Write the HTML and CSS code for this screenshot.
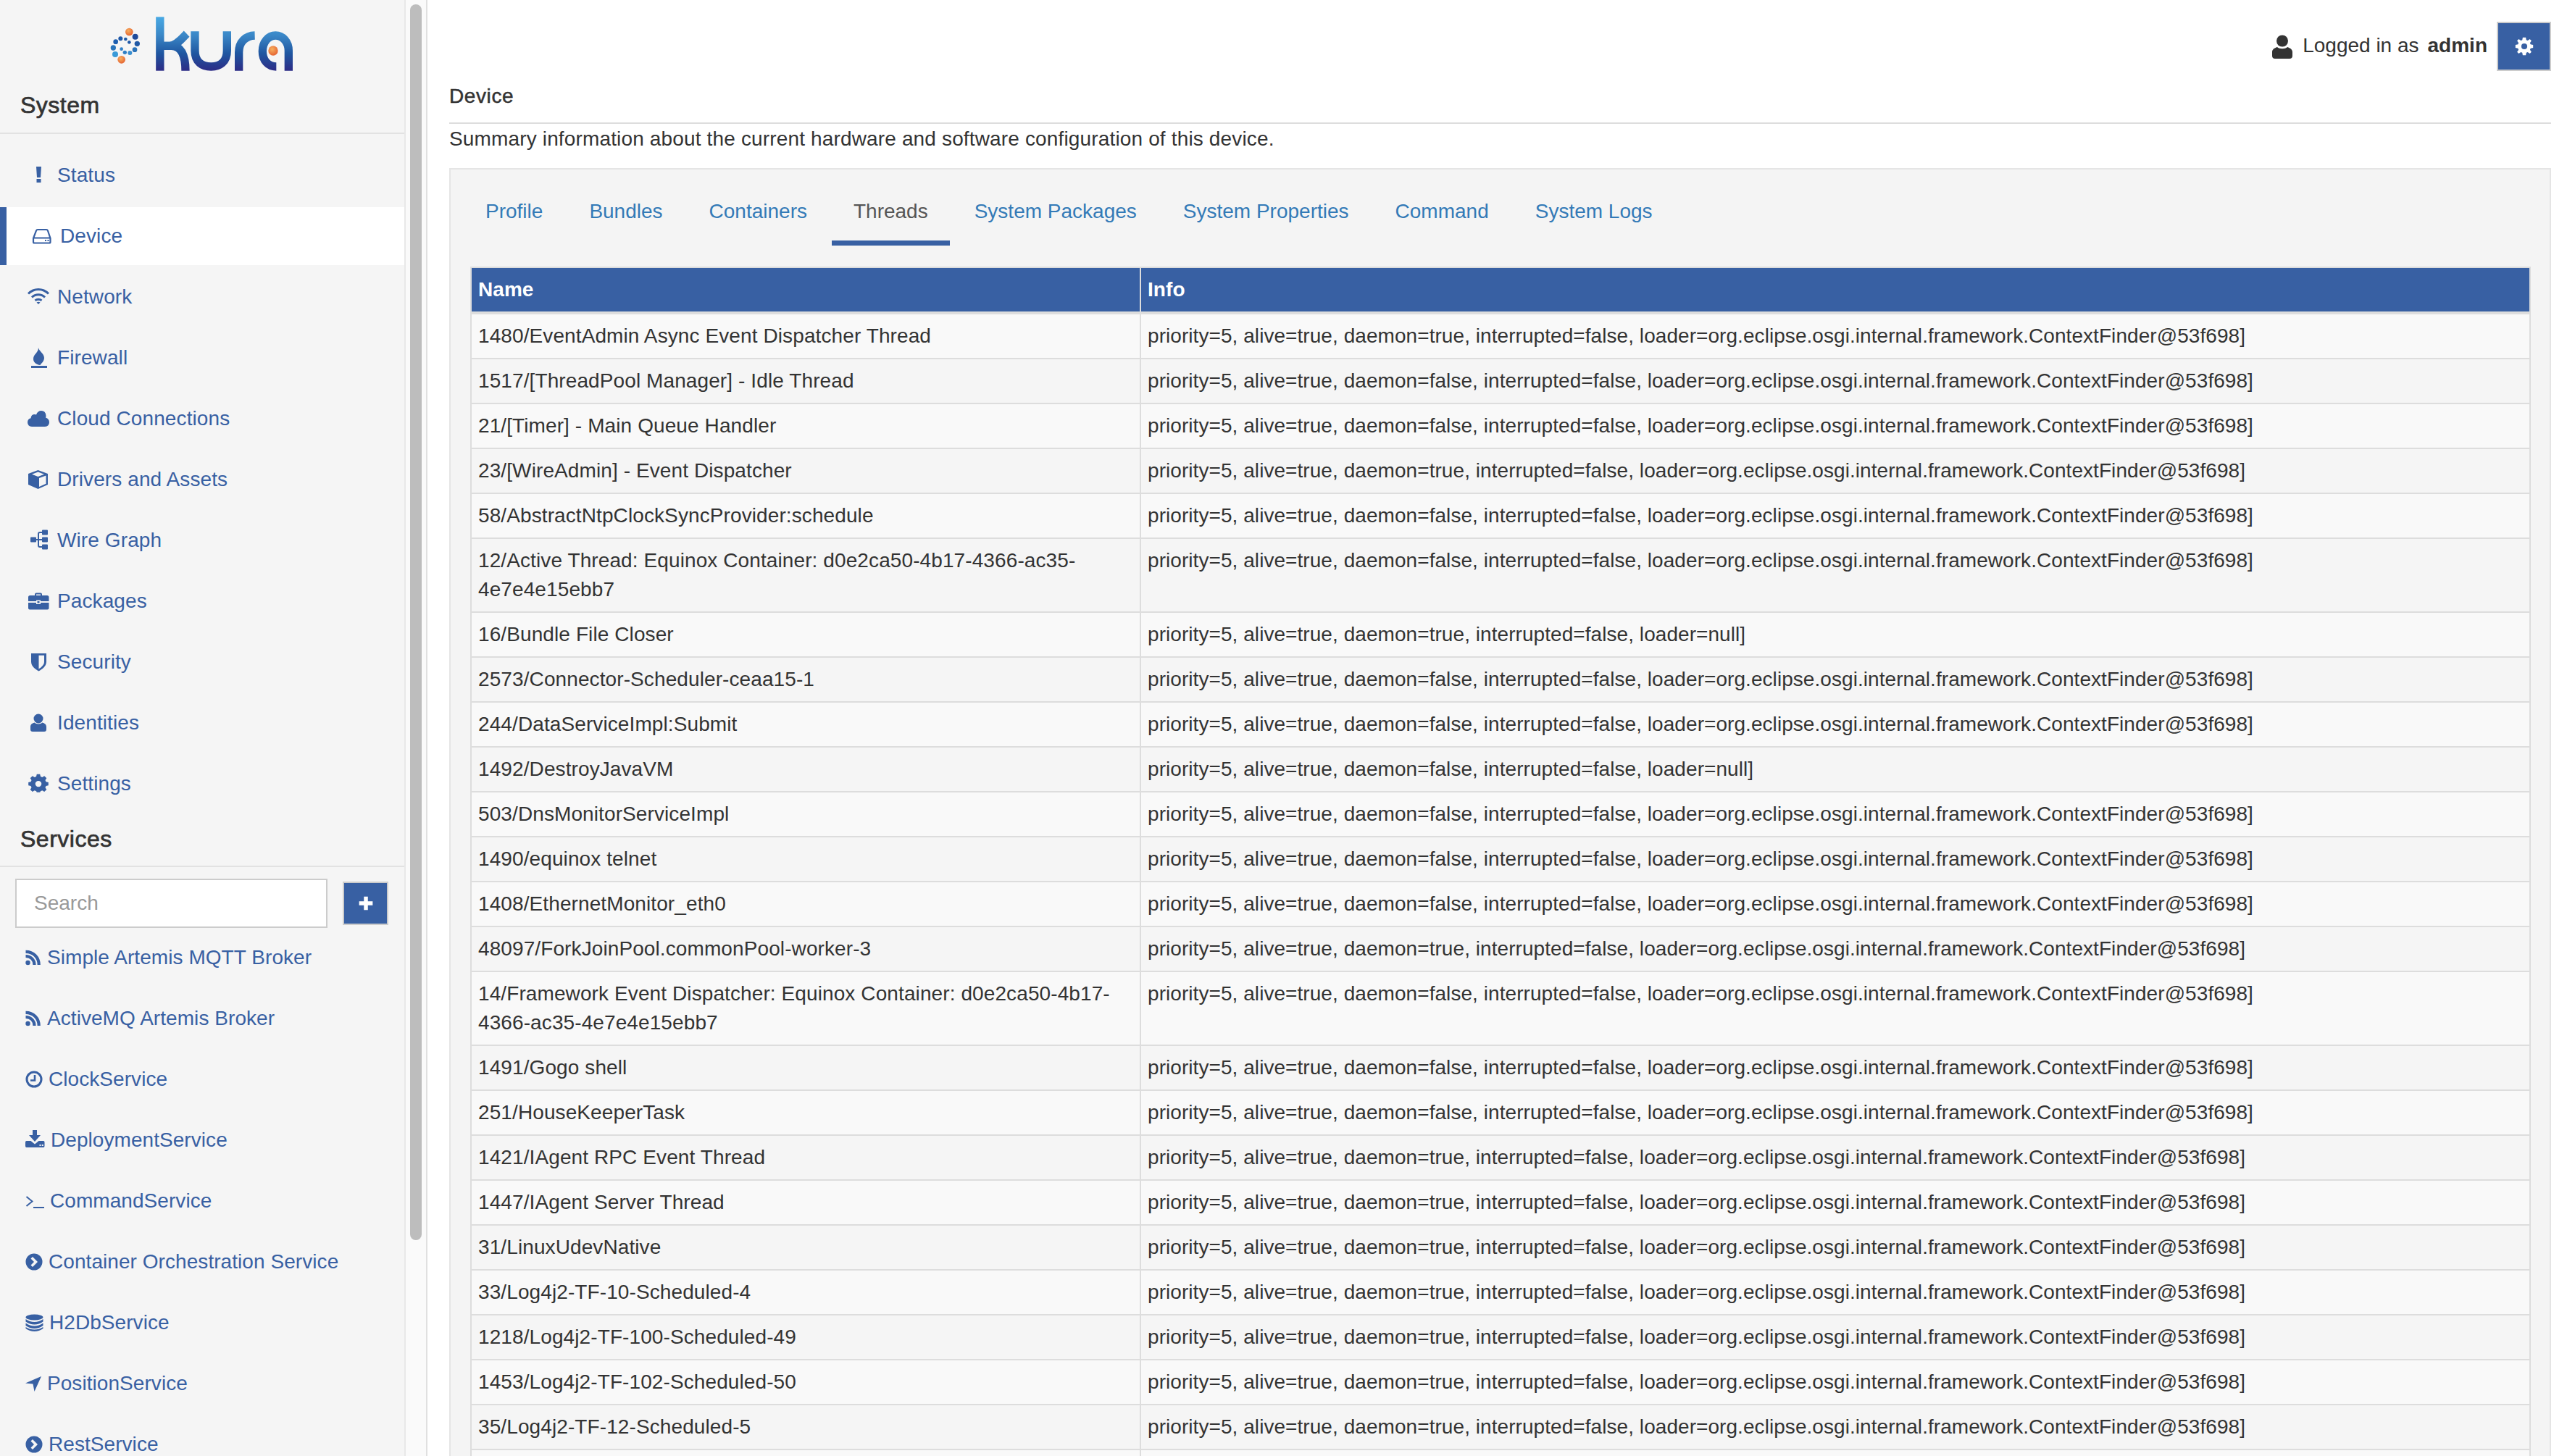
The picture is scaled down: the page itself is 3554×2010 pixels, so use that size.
FILE: index.html
```html
<!DOCTYPE html>
<html>
<head>
<meta charset="utf-8">
<title>Kura - Device</title>
<link rel="stylesheet" href="styles.css">
</head>
<body>
<svg class="defs" width="0" height="0">
	<defs>
		<linearGradient id="kuragrad" gradientUnits="userSpaceOnUse" x1="0" y1="25" x2="0" y2="248">
			<stop offset="0" stop-color="#48a9e4"/>
			<stop offset="0.35" stop-color="#3a86c6"/>
			<stop offset="0.68" stop-color="#1f56a0"/>
			<stop offset="1" stop-color="#2d2c86"/>
		</linearGradient>
		<radialGradient id="ball" cx="0.4" cy="0.35" r="0.7">
			<stop offset="0" stop-color="#f7b060"/>
			<stop offset="1" stop-color="#e4602f"/>
		</radialGradient>
		<symbol id="i-rss" viewBox="0 0 22 24">
			<circle cx="3.500" cy="19" r="3.200" fill="currentColor"/>
			<path d="M0.500 10C7.500 10 12.500 15 12.500 22M0.500 3.800C11 3.800 18.700 11.500 18.700 22" fill="none" stroke="currentColor" stroke-width="4.200"/>
		</symbol>
		<symbol id="i-chev" viewBox="0 0 24 24">
			<path fill="currentColor" fill-rule="evenodd" d="M12 0.500A11.500 11.500 0 1 1 12 23.500A11.500 11.500 0 1 1 12 .5ZM10 5L7.500 7.500 12 12 7.500 16.500 10 19 17 12Z"/>
		</symbol>
	</defs>
</svg>
<div class="app">
	<div class="side">
		<div class="side-inner">
			<div class="logo">
				<svg width="290" height="95" viewBox="0 0 870 285">
					<g fill="none" stroke="url(#kuragrad)" stroke-width="34">
						<path d="M242.500 25V248"/>
						<path d="M250 145H285C315 140 335 112 353 95"/>
						<path d="M250 145H290C330 145 348 185 348 248"/>
						<path d="M387 85V165C387 212 418 231 454 231C490 231 520 212 520 165V85"/>
						<path d="M569 248V172C569 128 598 103 635 102"/>
						<path d="M775 248V165C775 128 750 102 721 102C691 102 667 130 667 167C667 205 690 231 724 231"/>
					</g>
					<circle cx="711" cy="165" r="20" fill="url(#ball)"/>
					<circle cx="115" cy="87" r="16" fill="url(#ball)"/>
					<circle cx="83" cy="202" r="16" fill="url(#ball)"/>
					<circle cx="140" cy="107" r="12" fill="#1f4a9a"/>
					<circle cx="148" cy="136" r="11" fill="#2059a5"/>
					<circle cx="138" cy="161" r="10" fill="#2a72b8"/>
					<circle cx="118" cy="174" r="9" fill="#3a8fd0"/>
					<circle cx="97" cy="172" r="8" fill="#2f7fc5"/>
					<circle cx="83" cy="158" r="7" fill="#3080c8"/>
					<circle cx="115" cy="130" r="7" fill="#1e58a8"/>
					<circle cx="100" cy="117" r="7" fill="#1f5aa8"/>
					<circle cx="79" cy="115" r="9" fill="#2059a8"/>
					<circle cx="59" cy="128" r="10" fill="#1f5fb0"/>
					<circle cx="49" cy="153" r="11" fill="#2a74bb"/>
					<circle cx="57" cy="180" r="12" fill="#3a9ad8"/>
				</svg>
			</div>
			<div class="side-head first">System</div>
			<ul class="nav">
				<li><a href="#"><svg width="32" height="32" viewBox="0 0 32 32"><path d="M13 4h7l-1 15h-5zM13.500 21h6v5h-6z"/></svg>Status</a></li>
				<li class="active"><a href="#"><svg width="32" height="32" viewBox="0 0 32 32"><path fill="none" stroke="currentColor" stroke-width="2.200" d="M5 19L9 8.500Q9.500 7 11 7H23Q24.500 7 25 8.500L28.500 19V24Q28.500 25.500 27 25.500H6.500Q5 25.500 5 24ZM5 18.500H28.500"/><path d="M21 21h2v2h-2zM24.500 21h2v2h-2z"/></svg>Device</a></li>
				<li><a href="#"><svg width="32" height="32" viewBox="0 0 32 32"><path fill="none" stroke="currentColor" stroke-width="3" d="M2 11.500C10 3.500 22 3.500 30 11.500M7 16.500C12 11.500 20 11.500 25 16.500M11.500 20.800C14 18.800 18 18.800 20.500 20.800"/><path d="M13.500 23.500Q16 21.800 18.500 23.500L16 26z"/></svg>Network</a></li>
				<li><a href="#"><svg width="32" height="32" viewBox="0 0 32 32"><path d="M16 2C17 7 24 10 24 16C24 21 20 23.500 18.500 26C13 25.500 9 22 9 17.500C9 11 16 9 16 2Z"/><path d="M6 27h22v3H6z"/></svg>Firewall</a></li>
				<li><a href="#"><svg width="32" height="32" viewBox="0 0 32 32"><path d="M7 27Q1 26.500 1 21Q1 16.500 5.500 15.200Q6 10 11 10Q12 10 13 10.500Q15 5 20 5Q26 5 26.500 12Q26.500 13.500 26 14.500Q31 16 31 21Q31 26.500 25 27Z"/></svg>Cloud Connections</a></li>
				<li><a href="#"><svg width="32" height="32" viewBox="0 0 32 32"><path fill-rule="evenodd" d="M15.500 3L29 8V23L15.500 29L2 23V8ZM15.500 5.500L7 8.800L15.500 12L24 8.800ZM17 14V26L26.500 21.800V10.500Z"/></svg>Drivers and Assets</a></li>
				<li><a href="#"><svg width="32" height="32" viewBox="0 0 32 32"><path d="M5 12.500a1 1 0 0 1 1-1h6a1 1 0 0 1 1 1v5a1 1 0 0 1-1 1H6a1 1 0 0 1-1-1zM21 2.500a1 1 0 0 1 1-1h6a1 1 0 0 1 1 1v5a1 1 0 0 1-1 1h-6a1 1 0 0 1-1-1zM21 12.500a1 1 0 0 1 1-1h6a1 1 0 0 1 1 1v5a1 1 0 0 1-1 1h-6a1 1 0 0 1-1-1zM21 22.500a1 1 0 0 1 1-1h6a1 1 0 0 1 1 1v5a1 1 0 0 1-1 1h-6a1 1 0 0 1-1-1z"/><path fill="none" stroke="currentColor" stroke-width="2" d="M13 15H21M21 5H18Q16 5 16 7V23Q16 25 18 25H21"/></svg>Wire Graph</a></li>
				<li><a href="#"><svg width="32" height="32" viewBox="0 0 32 32"><path fill-rule="evenodd" d="M11 8V6.500Q11 4.500 13 4.500H19Q21 4.500 21 6.500V8H28Q30.500 8 30.500 10.500V16H19V14.500H13V16H2V10.500Q2 8 4.500 8ZM13 8H19V6.500H13ZM2 18H13V20H19V18H30.500V25.500Q30.500 27.500 28.500 27.500H4Q2 27.500 2 25.500ZM14.500 16H17.500V18.500H14.500Z"/></svg>Packages</a></li>
				<li><a href="#"><svg width="32" height="32" viewBox="0 0 32 32"><path fill-rule="evenodd" d="M6 4H27V15.500C27 22 21 26 16.500 28.500C12 26 6 22 6 15.500ZM16.500 6.800V25.500C20 23.300 24 20 24 15.500V6.800Z"/></svg>Security</a></li>
				<li><a href="#"><svg width="32" height="32" viewBox="0 0 32 32"><circle cx="16" cy="10" r="6.500"/><path d="M5 21.500C5 18 7.500 16.500 10.500 15.500C13 18 19 18 21.500 15.500C24.500 16.500 27 18 27 21.500V25Q27 28 24 28H8Q5 28 5 25Z"/></svg>Identities</a></li>
				<li><a href="#"><svg width="32" height="32" viewBox="0 0 32 32"><path fill-rule="evenodd" d="M13.800 4H18.200L19 7.300L21.300 8.300L24.200 6.500L27.300 9.600L25.500 12.500L26.500 14.800L29.800 15.600V20L26.500 20.800L25.500 23.100L27.300 26L24.200 29.100L21.300 27.300L19 28.300L18.200 30H13.800L13 28.300L10.700 27.300L7.800 29.100L4.700 26L6.500 23.100L5.500 20.800L2.200 20V15.600L5.500 14.800L6.500 12.500L4.700 9.600L7.800 6.500L10.700 8.300L13 7.300ZM16 13.500A4.300 4.300 0 1 0 16 22.100A4.300 4.300 0 1 0 16 13.500Z" transform="translate(0 -1) scale(1 .96)"/></svg>Settings</a></li>
			</ul>
			<div class="side-head">Services</div>
			<div class="search-row">
				<input class="search" type="text" placeholder="Search">
				<button class="btn-add"><svg width="22" height="22" viewBox="0 0 20 20"><path d="M7.500 1.500h5v6h6v5h-6v6h-5v-6h-6v-5h6z"/></svg></button>
			</div>
			<ul class="services">
				<li><a href="#"><svg width="22" height="24"><use href="#i-rss"/></svg>Simple Artemis MQTT Broker</a></li>
				<li><a href="#"><svg width="22" height="24"><use href="#i-rss"/></svg>ActiveMQ Artemis Broker</a></li>
				<li><a href="#"><svg width="24" height="24" viewBox="0 0 24 24"><path fill="none" stroke="currentColor" stroke-width="3" d="M12 2A10 10 0 1 1 12 22A10 10 0 1 1 12 2Z"/><path fill="none" stroke="currentColor" stroke-width="2.600" d="M13 6V13.500H7"/></svg>ClockService</a></li>
				<li><a href="#"><svg class="up" width="27" height="24" viewBox="0 0 27 24"><path d="M10 0h6v7h5l-8 9-8-9h5z"/><path fill-rule="evenodd" d="M1.500 15H7.500L13 19.500 18.500 15H25Q26.500 15 26.500 17V22Q26.500 24 25 24H1.500Q0 24 0 22V17Q0 15 1.500 15ZM19.500 20v2h2v-2zM22.800 20v2h2v-2z"/></svg>DeploymentService</a></li>
				<li><a href="#"><svg width="26" height="24" viewBox="0 0 26 24"><path fill="none" stroke="currentColor" stroke-width="2" d="M1.500 6L9.500 12.500L1.500 19M11 21H26"/></svg>CommandService</a></li>
				<li><a href="#"><svg width="24" height="24"><use href="#i-chev"/></svg>Container Orchestration Service</a></li>
				<li><a href="#"><svg width="25" height="24" viewBox="0 0 25 24"><ellipse cx="12.500" cy="4.500" rx="12" ry="4"/><path d="M.5 7Q6 11 12.500 11T24.500 7V10.500Q19 14.500 12.500 14.500T.5 10.500ZM.5 12.500Q6 16.500 12.500 16.500T24.500 12.500V16Q19 20 12.500 20T.5 16ZM.5 18Q6 21.500 12.500 21.500T24.500 18V20Q19 24 12.500 24T.5 20Z"/></svg>H2DbService</a></li>
				<li><a href="#"><svg width="22" height="24" viewBox="0 0 22 24"><path d="M22 2L12.500 23L10.500 12.500L0 11.500Z"/></svg>PositionService</a></li>
				<li><a href="#"><svg width="24" height="24"><use href="#i-chev"/></svg>RestService</a></li>
			</ul>
		</div>
		<div class="gutter"><div class="thumb"></div></div>
	</div>
	<div class="main">
		<div class="topbar">
			<svg class="user-icon" width="30" height="33" viewBox="0 0 30 33"><circle cx="15" cy="8.500" r="8"/><path d="M1 24C1 20 4 18.500 8 17C11 20 19 20 22 17C26 18.500 29 20 29 24V29Q29 33 25 33H5Q1 33 1 29Z"/></svg>
			<span class="logged">Logged in as</span>
			<b class="who">admin</b>
			<button class="btn-gear"><svg width="26" height="26" viewBox="0 0 32 32"><path fill-rule="evenodd" d="M13.400 1H18.600L19.400 5.300L21.800 6.300L25.400 3.800L28.200 6.600L25.700 10.200L26.700 12.600L31 13.400V18.600L26.700 19.400L25.700 21.800L28.200 25.400L25.400 28.200L21.800 25.700L19.400 26.700L18.600 31H13.400L12.600 26.700L10.200 25.700L6.600 28.200L3.800 25.400L6.300 21.800L5.300 19.400L1 18.600V13.400L5.300 12.600L6.300 10.200L3.800 6.600L6.600 3.800L10.200 6.300L12.600 5.300ZM16 11A5 5 0 1 0 16 21A5 5 0 1 0 16 11Z"/></svg></button>
		</div>
		<h1 class="title">Device</h1>
		<p class="summary">Summary information about the current hardware and software configuration of this device.</p>
		<div class="panel">
			<ul class="tabs">
				<li><a href="#">Profile</a></li>
				<li><a href="#">Bundles</a></li>
				<li><a href="#">Containers</a></li>
				<li class="on"><a href="#">Threads</a></li>
				<li><a href="#">System Packages</a></li>
				<li><a href="#">System Properties</a></li>
				<li><a href="#">Command</a></li>
				<li><a href="#">System Logs</a></li>
			</ul>
			<table class="grid">
				<colgroup><col class="col-name"><col></colgroup>
				<thead><tr><th>Name</th><th>Info</th></tr></thead>
				<tbody>
					<tr><td>1480/EventAdmin Async Event Dispatcher Thread</td><td>priority=5, alive=true, daemon=true, interrupted=false, loader=org.eclipse.osgi.internal.framework.ContextFinder@53f698]</td></tr>
					<tr><td>1517/[ThreadPool Manager] - Idle Thread</td><td>priority=5, alive=true, daemon=false, interrupted=false, loader=org.eclipse.osgi.internal.framework.ContextFinder@53f698]</td></tr>
					<tr><td>21/[Timer] - Main Queue Handler</td><td>priority=5, alive=true, daemon=false, interrupted=false, loader=org.eclipse.osgi.internal.framework.ContextFinder@53f698]</td></tr>
					<tr><td>23/[WireAdmin] - Event Dispatcher</td><td>priority=5, alive=true, daemon=true, interrupted=false, loader=org.eclipse.osgi.internal.framework.ContextFinder@53f698]</td></tr>
					<tr><td>58/AbstractNtpClockSyncProvider:schedule</td><td>priority=5, alive=true, daemon=false, interrupted=false, loader=org.eclipse.osgi.internal.framework.ContextFinder@53f698]</td></tr>
					<tr><td>12/Active Thread: Equinox Container: d0e2ca50-4b17-4366-ac35-4e7e4e15ebb7</td><td>priority=5, alive=true, daemon=false, interrupted=false, loader=org.eclipse.osgi.internal.framework.ContextFinder@53f698]</td></tr>
					<tr><td>16/Bundle File Closer</td><td>priority=5, alive=true, daemon=true, interrupted=false, loader=null]</td></tr>
					<tr><td>2573/Connector-Scheduler-ceaa15-1</td><td>priority=5, alive=true, daemon=false, interrupted=false, loader=org.eclipse.osgi.internal.framework.ContextFinder@53f698]</td></tr>
					<tr><td>244/DataServiceImpl:Submit</td><td>priority=5, alive=true, daemon=false, interrupted=false, loader=org.eclipse.osgi.internal.framework.ContextFinder@53f698]</td></tr>
					<tr><td>1492/DestroyJavaVM</td><td>priority=5, alive=true, daemon=false, interrupted=false, loader=null]</td></tr>
					<tr><td>503/DnsMonitorServiceImpl</td><td>priority=5, alive=true, daemon=false, interrupted=false, loader=org.eclipse.osgi.internal.framework.ContextFinder@53f698]</td></tr>
					<tr><td>1490/equinox telnet</td><td>priority=5, alive=true, daemon=false, interrupted=false, loader=org.eclipse.osgi.internal.framework.ContextFinder@53f698]</td></tr>
					<tr><td>1408/EthernetMonitor_eth0</td><td>priority=5, alive=true, daemon=false, interrupted=false, loader=org.eclipse.osgi.internal.framework.ContextFinder@53f698]</td></tr>
					<tr><td>48097/ForkJoinPool.commonPool-worker-3</td><td>priority=5, alive=true, daemon=true, interrupted=false, loader=org.eclipse.osgi.internal.framework.ContextFinder@53f698]</td></tr>
					<tr><td>14/Framework Event Dispatcher: Equinox Container: d0e2ca50-4b17-4366-ac35-4e7e4e15ebb7</td><td>priority=5, alive=true, daemon=false, interrupted=false, loader=org.eclipse.osgi.internal.framework.ContextFinder@53f698]</td></tr>
					<tr><td>1491/Gogo shell</td><td>priority=5, alive=true, daemon=false, interrupted=false, loader=org.eclipse.osgi.internal.framework.ContextFinder@53f698]</td></tr>
					<tr><td>251/HouseKeeperTask</td><td>priority=5, alive=true, daemon=false, interrupted=false, loader=org.eclipse.osgi.internal.framework.ContextFinder@53f698]</td></tr>
					<tr><td>1421/IAgent RPC Event Thread</td><td>priority=5, alive=true, daemon=true, interrupted=false, loader=org.eclipse.osgi.internal.framework.ContextFinder@53f698]</td></tr>
					<tr><td>1447/IAgent Server Thread</td><td>priority=5, alive=true, daemon=true, interrupted=false, loader=org.eclipse.osgi.internal.framework.ContextFinder@53f698]</td></tr>
					<tr><td>31/LinuxUdevNative</td><td>priority=5, alive=true, daemon=true, interrupted=false, loader=org.eclipse.osgi.internal.framework.ContextFinder@53f698]</td></tr>
					<tr><td>33/Log4j2-TF-10-Scheduled-4</td><td>priority=5, alive=true, daemon=true, interrupted=false, loader=org.eclipse.osgi.internal.framework.ContextFinder@53f698]</td></tr>
					<tr><td>1218/Log4j2-TF-100-Scheduled-49</td><td>priority=5, alive=true, daemon=true, interrupted=false, loader=org.eclipse.osgi.internal.framework.ContextFinder@53f698]</td></tr>
					<tr><td>1453/Log4j2-TF-102-Scheduled-50</td><td>priority=5, alive=true, daemon=true, interrupted=false, loader=org.eclipse.osgi.internal.framework.ContextFinder@53f698]</td></tr>
					<tr><td>35/Log4j2-TF-12-Scheduled-5</td><td>priority=5, alive=true, daemon=true, interrupted=false, loader=org.eclipse.osgi.internal.framework.ContextFinder@53f698]</td></tr>
					<tr><td>&nbsp;</td><td>&nbsp;</td></tr>
				</tbody>
			</table>
		</div>
	</div>
</div>
</body>
</html>
```

FILE: styles.css
```css
html, body{
	margin: 0;
	padding: 0;
	height: 100%;
	overflow: hidden;
	background: #fff;
	font-family: "Liberation Sans", Arial, Helvetica, sans-serif;
	font-size: 28px;
	line-height: 40px;
	color: #333;
}
a{
	text-decoration: none;
	color: inherit;
}
ul{
	list-style: none;
	margin: 0;
	padding: 0;
}
.defs{
	position: absolute;
}
.app{
	display: flex;
	height: 2010px;
	overflow: hidden;
}

/* left column */
.side{
	display: flex;
	flex: 0 0 590px;
	height: 2010px;
	box-sizing: border-box;
	border-right: 2px solid #e0e0e0;
	overflow: hidden;
}
.side-inner{
	flex: 0 0 560px;
	box-sizing: border-box;
	background: #f5f5f5;
	border-right: 2px solid #e8e8e8;
	overflow: hidden;
}
.gutter{
	flex: 1;
	background: #fafafa;
	padding: 6px 4px 0 6px;
}
.thumb{
	width: 16px;
	height: 1706px;
	background: #bdbdbd;
	border-radius: 8px;
}
.logo{
	height: 110px;
	padding: 15px 0 0 140px;
	box-sizing: border-box;
}
.logo svg{
	display: block;
}
.side-head{
	height: 71px;
	box-sizing: border-box;
	padding: 12px 0 0 28px;
	font-size: 32px;
	-webkit-text-stroke: 0.7px #333;
	letter-spacing: 0.5px;
	border-bottom: 2px solid #e2e2e2;
}
.side-head.first{
	height: 75px;
	padding-top: 15px;
}
.nav{
	padding-top: 17px;
	color: #3860a3;
	letter-spacing: 0.1px;
}
.nav li{
	height: 80px;
	margin-bottom: 4px;
}
.nav a{
	display: flex;
	align-items: center;
	height: 80px;
	padding-left: 37px;
}
.nav svg{
	flex: none;
	margin-right: 10px;
	fill: currentColor;
}
.nav li.active a{
	background: #fff;
	border-left: 9px solid #3860a3;
	padding-left: 32px;
}
.search-row{
	display: flex;
	align-items: center;
	gap: 21px;
	padding: 16px 0 1px 21px;
}
.search{
	width: 431px;
	height: 68px;
	box-sizing: border-box;
	border: 2px solid #ccc;
	padding: 0 24px;
	background: #fff;
	font-family: inherit;
	font-size: 28px;
	color: #333;
	outline: none;
	border-radius: 0;
}
.search::placeholder{
	color: #999;
	opacity: 1;
}
.btn-add{
	width: 63px;
	height: 60px;
	box-sizing: border-box;
	padding: 0;
	border: 2px solid #ccc;
	background: #3860a3;
	display: flex;
	align-items: center;
	justify-content: center;
}
.btn-add svg{
	fill: #fff;
}
.services{
	color: #3860a3;
	letter-spacing: 0.06px;
}
.services li{
	height: 80px;
	margin-bottom: 4px;
}
.services a{
	display: flex;
	align-items: center;
	height: 80px;
	padding-left: 35px;
}
.services svg{
	flex: none;
	margin-right: 8px;
	fill: currentColor;
}
.services svg.up{
	margin-bottom: 4px;
}

/* right column */
.main{
	flex: 1;
	min-width: 0;
	padding: 30px 33px 0 30px;
}
.topbar{
	display: flex;
	align-items: center;
	justify-content: flex-end;
	height: 68px;
}
.logged, .who{
	margin-top: -3px;
}
.user-icon{
	fill: #333;
	margin-right: 13px;
}
.who{
	margin-left: 12px;
	margin-right: 13px;
}
.btn-gear{
	width: 75px;
	height: 68px;
	box-sizing: border-box;
	padding: 0;
	border: 2px solid #ccc;
	background: #3860a3;
	display: flex;
	align-items: center;
	justify-content: center;
}
.btn-gear svg{
	fill: #fff;
}
.title{
	margin: 0;
	padding: 15px 0 16px;
	font-size: 28px;
	line-height: 40px;
	font-weight: normal;
	-webkit-text-stroke: 0.5px #333;
	letter-spacing: 0.6px;
	border-bottom: 2px solid #ddd;
}
.summary{
	margin: 1px 0 20px;
	letter-spacing: 0.15px;
}
.panel{
	border: 2px solid #e5e5e5;
	background: #f4f4f4;
	padding: 18px 26px 0 27px;
	min-height: 1800px;
}
.tabs{
	display: flex;
	gap: 4px;
	margin: 0 0 29px -9px;
	color: #337ab7;
}
.tabs a{
	display: block;
	padding: 20px 30px 20px;
	border-bottom: 7px solid transparent;
}
.tabs .on a{
	color: #555;
	border-bottom-color: #3860a3;
}
.grid{
	width: 100%;
	table-layout: fixed;
	border-collapse: collapse;
}
.col-name{
	width: 924px;
}
.grid th, .grid td{
	border: 2px solid #ddd;
	padding: 10px 10px 10px 9px;
	text-align: left;
	vertical-align: top;
	letter-spacing: 0.06px;
}
.grid td:first-child{
	letter-spacing: 0.1px;
}
.grid th{
	background: #3860a3;
	color: #fff;
	font-weight: bold;
	border-bottom-width: 4px;
}
.grid tbody tr:nth-child(odd){
	background: #f9f9f9;
}
.grid tbody tr:nth-child(even){
	background: #f5f5f5;
}
```
